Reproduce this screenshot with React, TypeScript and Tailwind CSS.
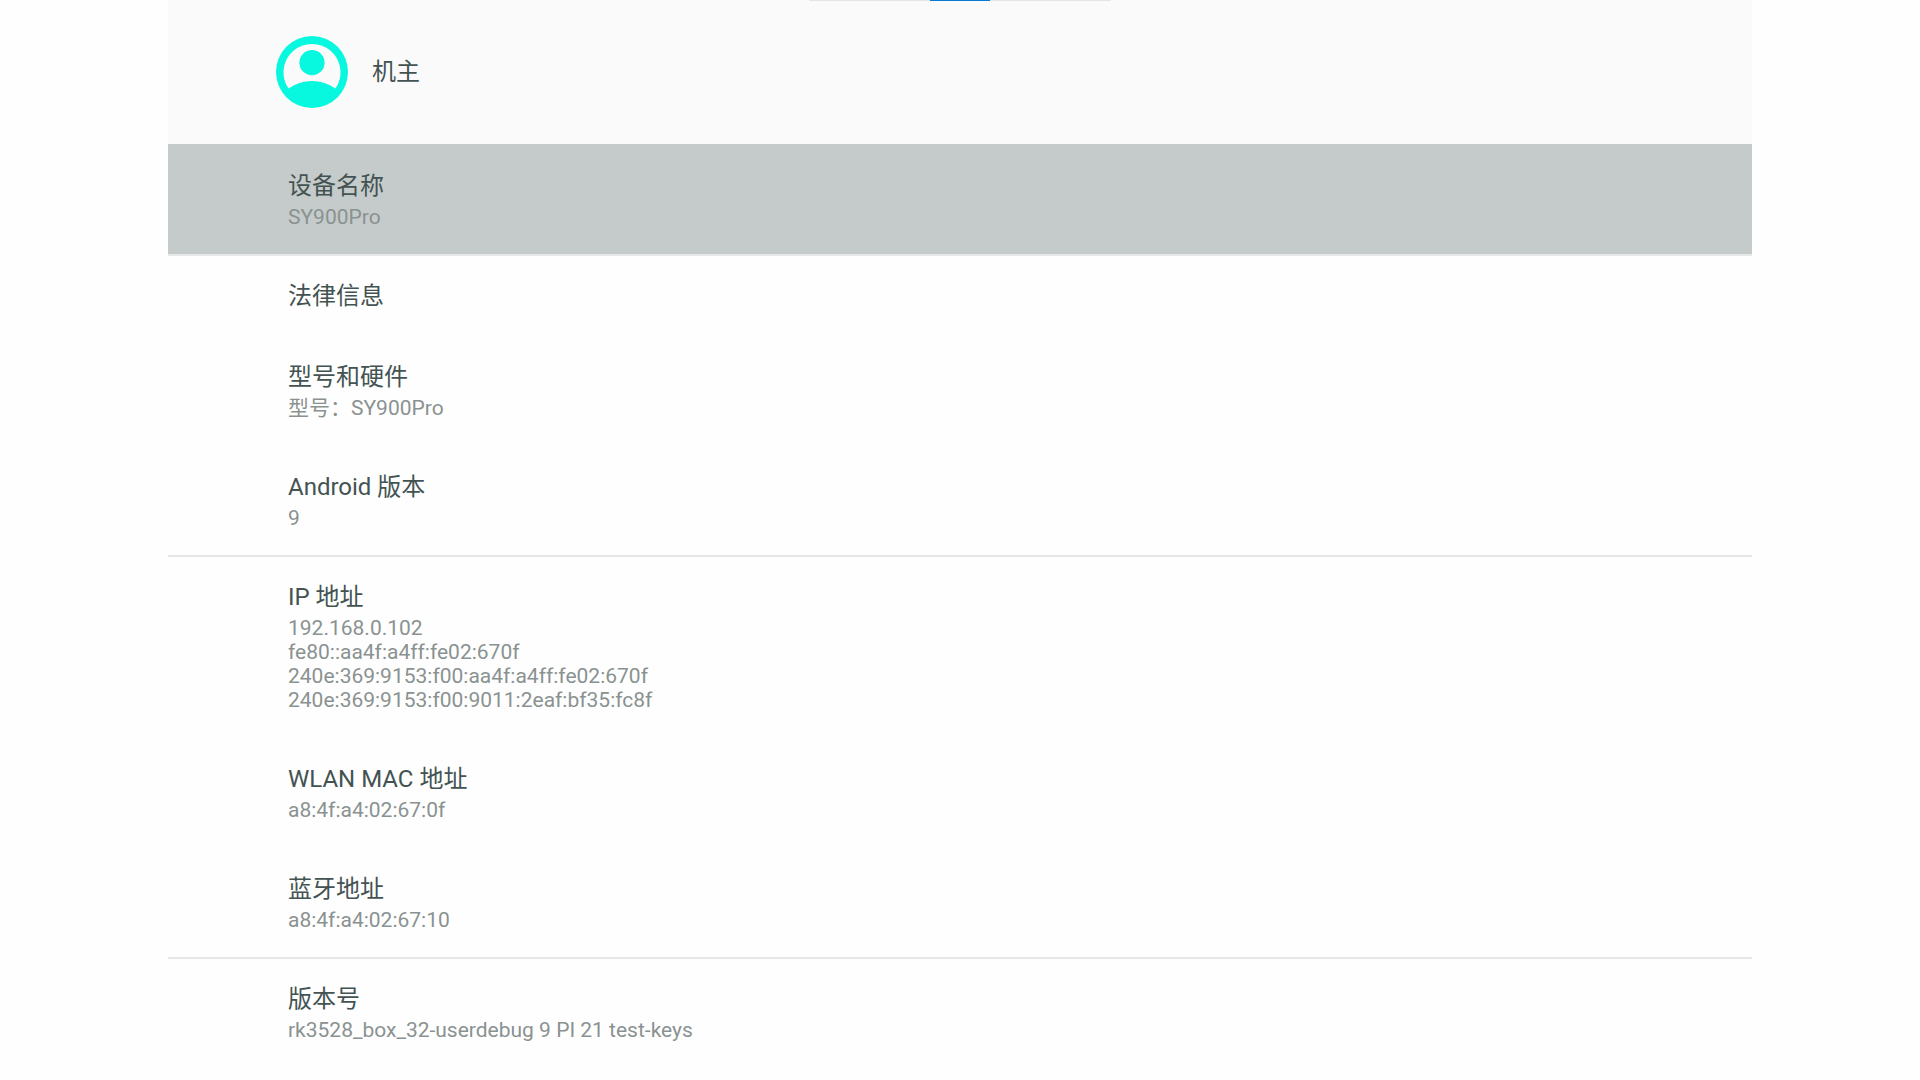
type Item = {
  title: string;
  summary?: string[];
  className: string;
};

const groups: Item[][] = [
  [{ title: "设备名称", summary: ["SY900Pro"], className: "pt-[23px] pb-[25px] bg-[#c5cbca]" }],
  [
    { title: "法律信息", className: "pt-[21px] pb-[22px]" },
    { title: "型号和硬件", summary: ["型号：SY900Pro"], className: "pt-[21px] pb-[27px]" },
    { title: "Android 版本", summary: ["9"], className: "pt-[21px] pb-[25px]" },
  ],
  [
    {
      title: "IP 地址",
      summary: [
        "192.168.0.102",
        "fe80::aa4f:a4ff:fe02:670f",
        "240e:369:9153:f00:aa4f:a4ff:fe02:670f",
        "240e:369:9153:f00:9011:2eaf:bf35:fc8f",
      ],
      className: "pt-[21px] pb-[27px]",
    },
    { title: "WLAN MAC 地址", summary: ["a8:4f:a4:02:67:0f"], className: "pt-[21px] pb-[27px]" },
    { title: "蓝牙地址", summary: ["a8:4f:a4:02:67:10"], className: "pt-[21px] pb-[25px]" },
  ],
  [{ title: "版本号", summary: ["rk3528_box_32-userdebug 9 PI 21 test-keys"], className: "pt-[21px] pb-[25px]" }],
];

const Avatar = () => {
  return (
    <svg viewBox="0 0 72 72" className="size-[72px] shrink-0" aria-hidden="true">
      <circle cx="36" cy="36" r="36" fill="#08f8df" />
      <path d="M12.5 52.5 A28.5 28.5 0 1 1 59.5 52.5 A40.5 40.5 0 0 0 12.5 52.5 Z" fill="#fafafa" />
      <circle cx="36" cy="26.7" r="12.6" fill="#08f8df" />
    </svg>
  );
};

const Row = ({ title, summary, className }: Item) => {
  return (
    <li>
      <button type="button" className={`block w-full px-[120px] text-left ${className}`}>
        <span className="block text-[24px] leading-[38px] text-[#435352]">{title}</span>
        {summary?.map((line) => (
          <span key={line} className="block text-[21px] leading-[24px] text-[#8a9291]">
            {line}
          </span>
        ))}
      </button>
    </li>
  );
};

export default function App() {
  return (
    <div className="min-h-screen bg-[#fefefe] px-[8.75%] font-[Roboto,'Noto_Sans_CJK_SC',sans-serif]">
      <header className="bg-[#fafafa]">
        <div className="mx-auto flex h-px w-[302px] justify-center bg-[#e4e4e4]">
          <div className="w-[60px] bg-[#0878d8]" />
        </div>
        <button type="button" className="flex w-full items-center gap-6 pt-[35px] pb-9 pl-[108px] text-left">
          <Avatar />
          <span className="text-[24px] leading-[38px] text-[#435352]">机主</span>
        </button>
      </header>

      <main>
        {groups.map((items) => (
          <ul key={items[0].title} className="border-b-2 border-[#e6e8e8] last:border-b-0">
            {items.map((item) => (
              <Row key={item.title} {...item} />
            ))}
          </ul>
        ))}
      </main>
    </div>
  );
}
